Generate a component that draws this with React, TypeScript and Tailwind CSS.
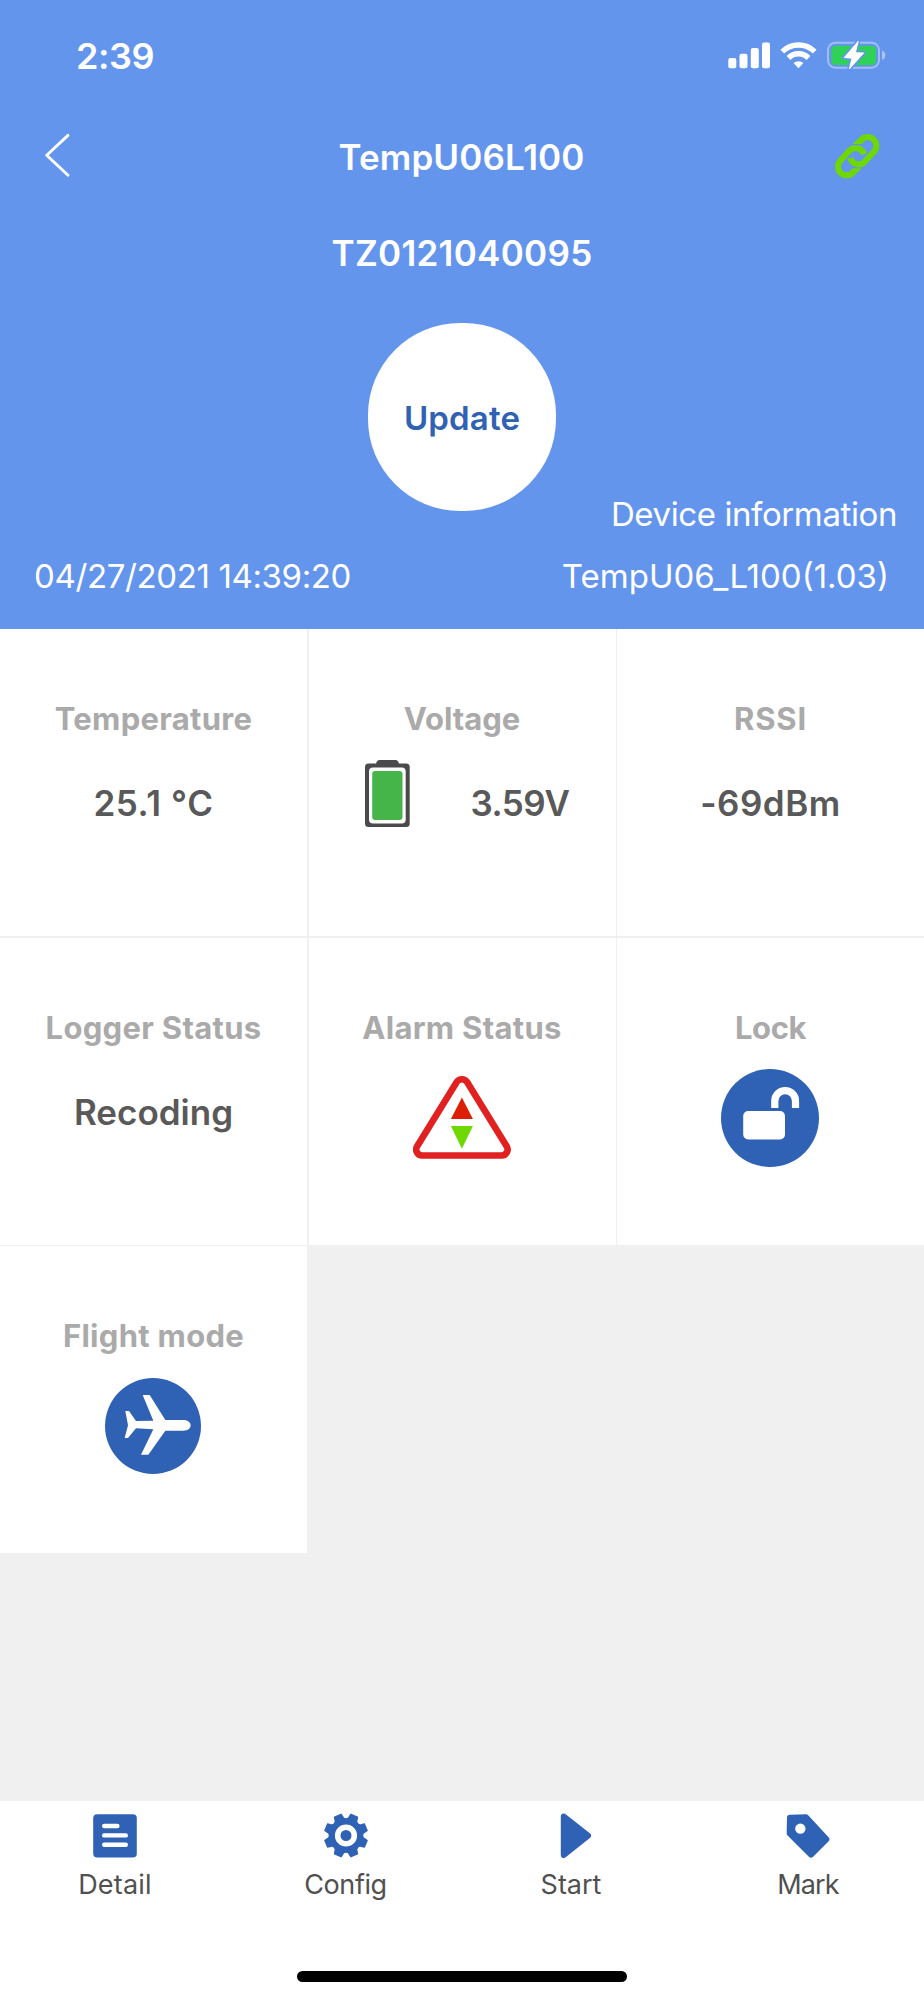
import type { ReactNode } from "react";

const BLUE = "#2f62b4";

const SignalIcon = () => (
  <svg className="h-[30px] w-[42px]" viewBox="0 0 42 30" fill="#fff">
    <rect x="0.3" y="18" width="8" height="10.3" rx="2" />
    <rect x="11.5" y="13.7" width="8" height="14.6" rx="2" />
    <rect x="22.8" y="8" width="8" height="20.3" rx="2" />
    <rect x="34" y="2.4" width="8" height="25.9" rx="2" />
  </svg>
);

const WifiIcon = () => (
  <svg className="h-[30px] w-[37px]" viewBox="0 0 37 30" fill="none" stroke="#fff" strokeWidth="5.4">
    <path d="M2.3 11.7A23 23 0 0 1 34.7 11.7" />
    <path d="M8.5 18A14 14 0 0 1 28.5 18" />
    <path d="M18.5 28.2L13.6 23.1A7.4 7.4 0 0 1 23.4 23.1Z" fill="#fff" stroke="none" />
  </svg>
);

const ChargingIcon = () => (
  <svg className="h-[30px] w-[61px]" viewBox="0 0 61 30">
    <rect x="2" y="2.7" width="51" height="25" rx="7.5" fill="none" stroke="#fff" strokeOpacity="0.4" strokeWidth="1.9" />
    <path d="M56 10.5C60.5 12 60.5 18.5 56 20Z" fill="#fff" fillOpacity="0.45" />
    <rect x="5.3" y="5.7" width="44.7" height="19.3" rx="4.2" fill="#30d158" />
    <path
      d="M32.3 1.2L18.3 17.6L26 18.2L23.3 29L37.7 12.9L29.4 12.7Z"
      fill="#fff"
      stroke="#6495ed"
      strokeWidth="4"
      strokeLinejoin="round"
      paintOrder="stroke"
    />
    <path d="M32.3 1.2L18.3 17.6L26 18.2L23.3 29L37.7 12.9L29.4 12.7Z" fill="#fff" stroke="#fff" strokeWidth="0.8" strokeLinejoin="round" />
  </svg>
);

const ChevronIcon = () => (
  <svg className="h-[46px] w-[28px]" viewBox="0 0 28 46" fill="none" stroke="#fff" strokeWidth="2.9" strokeLinecap="round" strokeLinejoin="round">
    <path d="M25 3.4L3.7 23.2L25 43.2" />
  </svg>
);

const ChainHalf = () => (
  <>
    <path d="M132.1 103A26 26 0 0 0 88.6 91.6L61.6 121.6A26 26 0 0 0 98.4 158.4" fill="none" stroke="#6dd900" strokeWidth="18" />
    <path d="M91 151L98 145H124.6L104.4 165.2Z" fill="#6dd900" />
  </>
);

const ChainIcon = () => (
  <svg className="h-[46px] w-[46px]" viewBox="42 39 138 138">
    <ChainHalf />
    <g transform="rotate(180 111.5 108.5)">
      <ChainHalf />
    </g>
  </svg>
);

const BatteryIcon = () => (
  <svg className="h-[67px] w-[45px]" viewBox="0 0 45 67">
    <path d="M11 5C11 2 12.5 0 14.5 0H30.5C32.5 0 34 2 34 5Z" fill="#4a4a4c" />
    <rect x="0" y="3.5" width="44.7" height="63.5" rx="3.5" fill="#4a4a4c" />
    <rect x="4" y="7.5" width="36.7" height="56" rx="4" fill="#fff" />
    <rect x="7.2" y="11" width="30.3" height="49" rx="3" fill="#45b54a" />
  </svg>
);

const AlarmIcon = () => (
  <svg className="h-[83px] w-[98px]" viewBox="412.9 1075.9 98 83">
    <path
      d="M456.3 1082.4A6.3 6.3 0 0 1 467.3 1082.4L506.8 1146.6A6 6 0 0 1 501.6 1155.4H422A6 6 0 0 1 416.8 1146.6Z"
      fill="none"
      stroke="#e12020"
      strokeWidth="6.6"
    />
    <path d="M461.8 1097.3L472.8 1119H450.8Z" fill="#dc1e05" />
    <path d="M461.8 1148.7L472.8 1126H450.8Z" fill="#6dd900" />
  </svg>
);

const LockIcon = () => (
  <svg className="h-[98px] w-[98px]" viewBox="0 0 98 98">
    <circle cx="49" cy="49" r="49" fill={BLUE} />
    <rect x="22.2" y="42" width="41.8" height="28.5" rx="5" fill="#fff" />
    <path d="M53.8 39V31.9A10.35 10.35 0 0 1 74.5 31.9V39" fill="none" stroke="#fff" strokeWidth="7.2" />
  </svg>
);

const PlaneIcon = () => (
  <svg className="h-[96px] w-[96px]" viewBox="45 39 288 288">
    <circle cx="189" cy="183" r="144" fill={BLUE} />
    <path
      d="M158 90H179L226 165H280C294 165 302 173 302 181C302 190 294 197 280 197H226L175 269H153L190 193L138 190L114 219H104L114 181L106 138H117L138 168L190 167Z"
      fill="#fff"
    />
  </svg>
);

const DetailIcon = () => (
  <svg className="h-[46px] w-[46px]" viewBox="0 0 46 46">
    <rect x="1.2" y="1.2" width="43.6" height="43.4" rx="4" fill={BLUE} />
    <path d="M12.2 13H25.4M12.2 22.4H33.8M12.2 31.7H33.8" stroke="#fff" strokeWidth="4.4" strokeLinecap="round" />
  </svg>
);

const polar = (radius: number, deg: number) => {
  const rad = (deg * Math.PI) / 180;
  return `${(23 + radius * Math.cos(rad)).toFixed(2)} ${(22.5 + radius * Math.sin(rad)).toFixed(2)}`;
};

// eight teeth with a rounded notch between each pair
const gearPath =
  Array.from({ length: 8 }, (_, i) => {
    const a = i * 45;
    return `${i ? "L" : "M"}${polar(22.4, a + 12)}L${polar(22.4, a + 33)}L${polar(19.8, a + 36.5)}A3 3 0 0 0 ${polar(19.8, a + 53.5)}`;
  }).join("") + "Z";

const ConfigIcon = () => (
  <svg className="h-[46px] w-[46px]" viewBox="0 0 46 46">
    <path d={gearPath} fill={BLUE} />
    <circle cx="23" cy="22.5" r="8.3" fill="none" stroke="#fff" strokeWidth="5.6" />
  </svg>
);

const StartIcon = () => (
  <svg className="ml-[9px] h-[46px] w-[46px]" viewBox="0 0 46 46">
    <path d="M10.8 3.6L35 22.6L10.8 42Z" fill={BLUE} stroke={BLUE} strokeWidth="6" strokeLinejoin="round" />
  </svg>
);

const MarkIcon = () => (
  <svg className="h-[46px] w-[46px]" viewBox="969 98 138 138">
    <path d="M984 112L1032 111L1093 177L1047 223L983 159Z" fill={BLUE} stroke={BLUE} strokeWidth="18" strokeLinejoin="round" />
    <circle cx="1015" cy="145" r="15.5" fill="#fff" />
  </svg>
);

const Value = ({ className, children }: { className?: string; children: ReactNode }) => (
  <span className={`text-[35px] leading-[44px] font-semibold whitespace-nowrap text-[#595959] ${className ?? ""}`}>
    {children}
  </span>
);

const cards = [
  {
    label: "Temperature",
    labelClass: "tracking-[0.3px]",
    content: <Value className="mt-[44px] tracking-[0.6px]">25.1 °C</Value>,
  },
  {
    label: "Voltage",
    labelClass: "tracking-normal",
    content: (
      <div className="mt-[23px] flex w-full gap-[61px] pl-[56px]">
        <BatteryIcon />
        <Value className="mt-[21px] tracking-[-0.5px]">3.59V</Value>
      </div>
    ),
  },
  {
    label: "RSSI",
    labelClass: "tracking-[0.8px]",
    content: <Value className="mt-[44px] tracking-[0.5px]">-69dBm</Value>,
  },
  {
    label: "Logger Status",
    labelClass: "tracking-[0.3px]",
    content: <Value className="mt-[44px]">Recoding</Value>,
  },
  {
    label: "Alarm Status",
    labelClass: "tracking-[0.3px]",
    content: <div className="mt-[30px]"><AlarmIcon /></div>,
  },
  {
    label: "Lock",
    labelClass: "tracking-[-0.4px]",
    content: <div className="mt-[23px] pr-[2px]"><LockIcon /></div>,
  },
  {
    label: "Flight mode",
    labelClass: "tracking-[0.3px]",
    content: <div className="mt-[24px] pr-[2px]"><PlaneIcon /></div>,
  },
];

const tabs = [
  { label: "Detail", icon: DetailIcon, className: "w-[230px] tracking-[0.2px]" },
  { label: "Config", icon: ConfigIcon, className: "w-[231px] tracking-[-0.4px]" },
  { label: "Start", icon: StartIcon, className: "w-[220px]" },
  { label: "Mark", icon: MarkIcon, className: "w-[243px] pl-[11px] tracking-[-0.9px]" },
];

const Header = () => (
  <header className="h-[629px] bg-[#6495ed] text-white">
    <div className="flex items-start justify-between pt-[34px] pr-[37px] pl-[76px]">
      <span className="text-[36px] leading-[44px] font-semibold tracking-[-0.4px]">2:39</span>
      <div className="flex pt-[6px]">
        <SignalIcon />
        <div className="ml-[10px]"><WifiIcon /></div>
        <div className="ml-[9px]"><ChargingIcon /></div>
      </div>
    </div>

    <div className="mt-[54px] flex h-[48px] items-start justify-between pr-[44px] pl-[43px]">
      <div className="w-[46px]"><ChevronIcon /></div>
      <h1 className="pt-[1px] text-[35px] leading-[48px] font-semibold tracking-[0.1px]">TempU06L100</h1>
      <div className="pt-[1px]"><ChainIcon /></div>
    </div>

    <div className="mt-[49px] text-center text-[35px] leading-[48px] font-semibold tracking-[0.3px]">TZ0121040095</div>

    <button className="mx-auto mt-[46px] flex h-[188px] w-[188px] items-center justify-center rounded-[92px] bg-white pt-[3px] text-[33px] font-semibold tracking-[0.15px] text-[#2f62b4]">
      Update
    </button>

    <div className="-mt-[17px] pr-[27px] text-right text-[33px] leading-[40px] tracking-[-0.4px]">Device information</div>
    <div className="mt-[22px] flex justify-between pr-[35px] pl-[34px] text-[33px] leading-[40px]">
      <span className="tracking-[-0.37px]">04/27/2021 14:39:20</span>
      <span>TempU06_L100(1.03)</span>
    </div>
  </header>
);

export default function App() {
  return (
    <div className="flex h-[2000px] w-[924px] flex-col overflow-hidden bg-[#f0f0f0] font-['Inter',sans-serif]">
      <Header />

      <main className="flex-1">
        <div className="grid auto-rows-[307px] grid-cols-[307px_307px_307px] gap-[1.5px]">
          {cards.map((card) => (
            <section key={card.label} className="flex flex-col items-center bg-white pt-[72px]">
              <h2 className={`text-[31px] leading-[36px] font-bold whitespace-nowrap text-[#aaaaaa] ${card.labelClass}`}>
                {card.label}
              </h2>
              {card.content}
            </section>
          ))}
        </div>
      </main>

      <footer className="flex h-[199px] flex-col items-center bg-white pt-[12px]">
        <nav className="flex w-full">
          {tabs.map((tab) => (
            <div key={tab.label} className={`flex shrink-0 flex-col items-center text-[27px] leading-[32px] text-[#505050] ${tab.className}`}>
              <tab.icon />
              <span className="mt-[10px]">{tab.label}</span>
            </div>
          ))}
        </nav>
        <div className="mt-[70px] h-[11px] w-[330px] rounded-full bg-black" />
      </footer>
    </div>
  );
}
